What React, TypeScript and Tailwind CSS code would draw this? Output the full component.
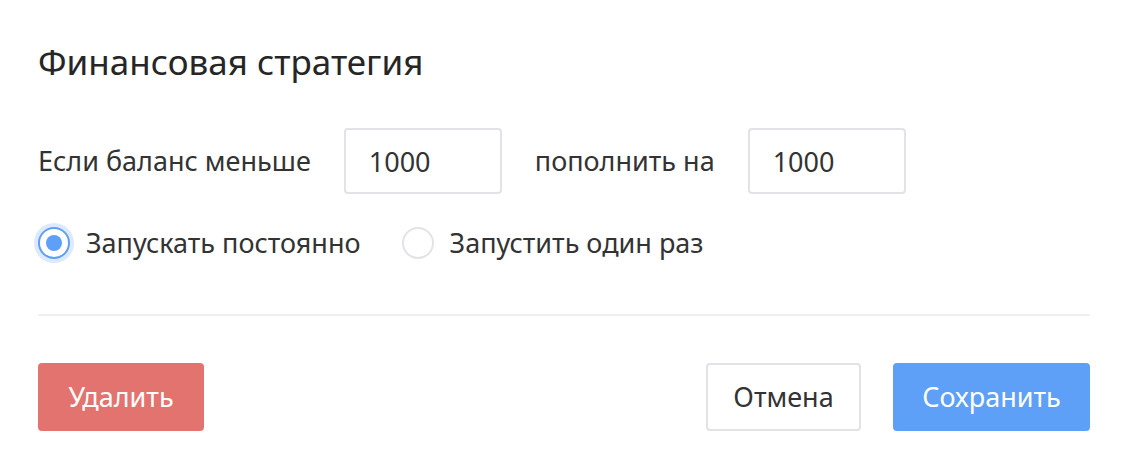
import { useState } from "react";

const font = { fontFamily: '"Noto Sans", "Open Sans", sans-serif' };

const Radio = ({ checked, label, onClick }: { checked: boolean; label: string; onClick: () => void }) => (
    <button type="button" onClick={onClick} className="flex items-center gap-4">
        <span
            className={`flex h-8 w-8 items-center justify-center rounded-full border-2 bg-white ${
                checked ? "border-[#5e9ff7] ring-4 ring-[#dde9fd]" : "border-[#e2e2e8]"
            }`}
        >
            {checked && <span className="h-4 w-4 rounded-full bg-[#5e9ff7]" />}
        </span>
        <span className="text-[27px] leading-8 text-[#333]">{label}</span>
    </button>
);

export default function App() {
    const [mode, setMode] = useState<"always" | "once">("always");

    return (
        <div className="h-[462px] w-[1134px] bg-white pl-[38px] pr-[44px] pt-[38px] text-[#333]" style={font}>
            <h1 className="text-[35px] leading-[48px] font-normal text-[#262626]">Финансовая стратегия</h1>

            <div className="mt-[42px] flex items-center gap-[33px] text-[27px]">
                <span>Если баланс меньше</span>
                <input
                    defaultValue="1000"
                    className="h-[66px] w-[158px] rounded border-2 border-[#e2e2e8] px-[23px] text-[27px] outline-none"
                />
                <span>пополнить на</span>
                <input
                    defaultValue="1000"
                    className="h-[66px] w-[158px] rounded border-2 border-[#e2e2e8] px-[23px] text-[27px] outline-none"
                />
            </div>

            <div className="mt-[33px] flex items-center gap-[41px]">
                <Radio checked={mode === "always"} label="Запускать постоянно" onClick={() => setMode("always")} />
                <Radio checked={mode === "once"} label="Запустить один раз" onClick={() => setMode("once")} />
            </div>

            <div className="mt-[55px] h-[2px] bg-[#eeeef3]" />

            <div className="mt-[47px] flex items-center">
                <button className="h-[68px] w-[166px] rounded bg-[#e3736f] text-[27px] text-white">Удалить</button>
                <div className="ml-auto flex gap-8">
                    <button className="h-[68px] w-[155px] rounded border-2 border-[#e2e2e8] bg-white text-[27px] text-[#333]">
                        Отмена
                    </button>
                    <button className="h-[68px] w-[197px] rounded bg-[#5e9ff7] text-[27px] text-white">Сохранить</button>
                </div>
            </div>
        </div>
    );
}
